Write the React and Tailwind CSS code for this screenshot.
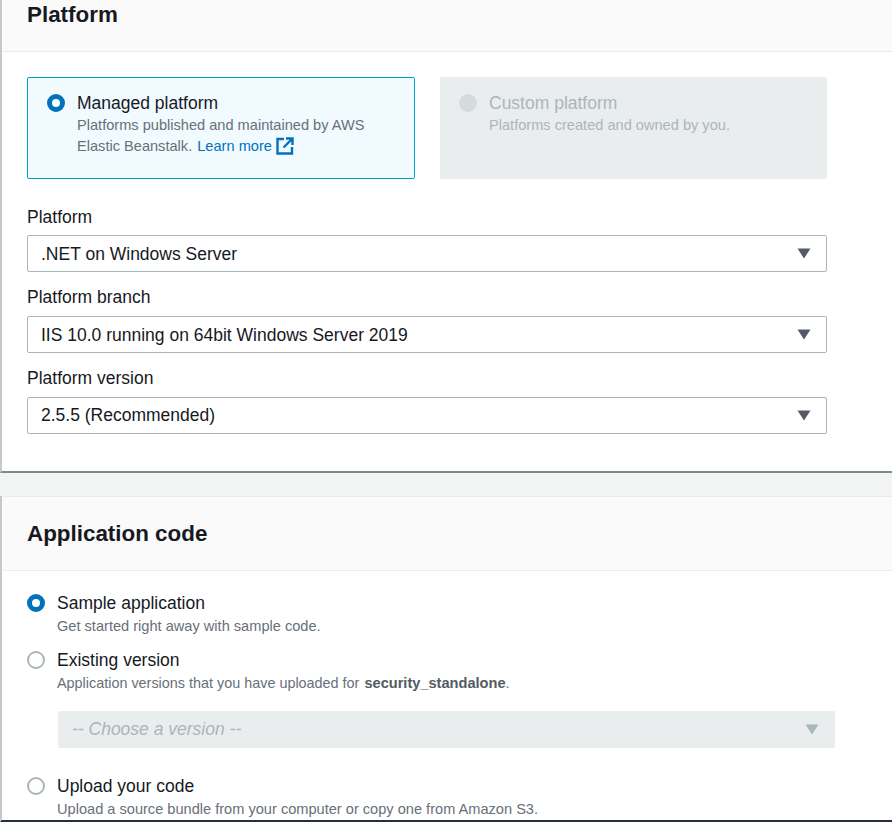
function Caret({ disabled }) {
  return (
    <svg width="14" height="11" viewBox="0 0 14 11" className="shrink-0">
      <path d="M0.5 0.5 H13.5 L7 10.5 Z" fill={disabled ? '#aab7b8' : '#545b64'} />
    </svg>
  );
}

function Radio({ checked, disabled }) {
  if (disabled) return <span className="block w-[18px] h-[18px] rounded-full bg-[#d5dbdb] shrink-0" />;
  if (checked) return <span className="block w-[18px] h-[18px] rounded-full border-[5px] border-[#0073bb] bg-white shrink-0" />;
  return <span className="block w-[18px] h-[18px] rounded-full border-2 border-[#aab7b8] bg-white shrink-0" />;
}

function LinkIcon() {
  return (
    <svg width="18" height="18" viewBox="0 0 18 18" fill="none" stroke="#0073bb" strokeWidth="2.4" className="inline-block ml-[4px] align-[-4px]">
      <path d="M8 2 H1.5 V16.5 H16 V10" />
      <path d="M7.5 10.5 L15.5 2.5 M10 1.5 H16.5 V8" />
    </svg>
  );
}

function SelectField({ label, value, mt, boxMt, valuePt }) {
  return (
    <div className={mt}>
      <div className="text-[17.5px] leading-[22px] text-[#16191f]">{label}</div>
      <div className={`${boxMt} h-[37px] border border-[#aab7b8] rounded-[2px] bg-white pl-[13px] pr-[15px] flex items-center justify-between text-[17.5px] text-[#16191f]`}>
        <span className={valuePt}>{value}</span>
        <Caret />
      </div>
    </div>
  );
}

export default function App() {
  return (
    <div className="h-[822px] overflow-hidden bg-[#f2f3f3] font-['Liberation_Sans',Arial,sans-serif] relative">
      {/* Platform panel */}
      <section className="h-[473px] bg-white border-l-2 border-[#c6c9c9] border-b-2 border-b-[#7d8a8b]">
        <div className="h-[52px] bg-[#fafafa] border-b border-[#eaeded] pl-[25px] pt-[1px]">
          <h2 className="text-[22.4px] leading-[28px] font-bold text-[#16191f]">Platform</h2>
        </div>
        <div className="pl-[25px] w-[825px] pt-[25px]">
          <div className="flex gap-[25px]">
            <div className="w-[388px] h-[102px] bg-[#f1faff] border border-[#00a1c9] rounded-[2px] pl-[19px] pt-[14px] flex gap-[12px]">
              <div className="pt-[2px]"><Radio checked /></div>
              <div>
                <div className="text-[17.5px] leading-[22px] text-[#16191f]">Managed platform</div>
                <div className="mt-[1px] text-[14.6px] leading-[21px] text-[#687078]">
                  Platforms published and maintained by AWS<br />
                  Elastic Beanstalk. <span className="ml-[1px] text-[#0073bb]">Learn more</span>
                  <LinkIcon />
                </div>
              </div>
            </div>
            <div className="w-[387px] h-[102px] bg-[#eaeded] rounded-[2px] pl-[19px] pt-[15px] flex gap-[12px]">
              <div className="pt-[2px]"><Radio disabled /></div>
              <div>
                <div className="text-[17.5px] leading-[22px] text-[#aab7b8]">Custom platform</div>
                <div className="mt-[1px] text-[14.6px] leading-[21px] text-[#aab7b8]">Platforms created and owned by you.</div>
              </div>
            </div>
          </div>
          <SelectField mt="mt-[27px]" boxMt="mt-[7px]" valuePt="pt-[1px]" label="Platform" value=".NET on Windows Server" />
          <SelectField mt="mt-[14px]" boxMt="mt-[8px]" valuePt="pt-[1px]" label="Platform branch" value="IIS 10.0 running on 64bit Windows Server 2019" />
          <SelectField mt="mt-[14px]" boxMt="mt-[8px]" valuePt="pt-0" label="Platform version" value="2.5.5 (Recommended)" />
        </div>
      </section>

      {/* Application code panel */}
      <section className="mt-[23px] h-[326px] bg-white border-l-2 border-[#c6c9c9] border-b-2 border-b-[#232f3e]">
        <div className="h-[75px] bg-[#fafafa] border-b border-[#eaeded] border-t border-t-[#eaeded] pl-[25px] flex items-center">
          <h2 className="text-[22.4px] leading-[28px] font-bold text-[#16191f]">Application code</h2>
        </div>
        <div className="pl-[25px] pt-[21px]">
          <div className="flex gap-[12px]">
            <div className="pt-[2px]"><Radio checked /></div>
            <div>
              <div className="text-[17.5px] leading-[22px] text-[#16191f]">Sample application</div>
              <div className="mt-[2px] text-[14.6px] leading-[21px] text-[#687078]">Get started right away with sample code.</div>
            </div>
          </div>
          <div className="flex gap-[12px] mt-[12px]">
            <div className="pt-[2px]"><Radio /></div>
            <div>
              <div className="text-[17.5px] leading-[22px] text-[#16191f]">Existing version</div>
              <div className="mt-[2px] text-[14.6px] leading-[21px] text-[#687078]">
                <span className="text-[14.4px]">Application versions that you have uploaded for </span>
                <b className="ml-[1px] font-bold text-[#545b64]">security_standalone</b>.
              </div>
            </div>
          </div>
          <div className="ml-[31px] mt-[17px] w-[777px] h-[37px] bg-[#eaeded] rounded-[2px] pl-[14px] pr-[16px] flex items-center justify-between text-[17.5px] italic text-[#aab7b8]">
            <span>-- Choose a version --</span>
            <Caret disabled />
          </div>
          <div className="flex gap-[12px] mt-[27px]">
            <div className="pt-[2px]"><Radio /></div>
            <div>
              <div className="text-[17.5px] leading-[22px] text-[#16191f]">Upload your code</div>
              <div className="mt-[2px] text-[14.6px] leading-[21px] text-[#687078]">Upload a source bundle from your computer or copy one from Amazon S3.</div>
            </div>
          </div>
        </div>
      </section>
    </div>
  );
}
